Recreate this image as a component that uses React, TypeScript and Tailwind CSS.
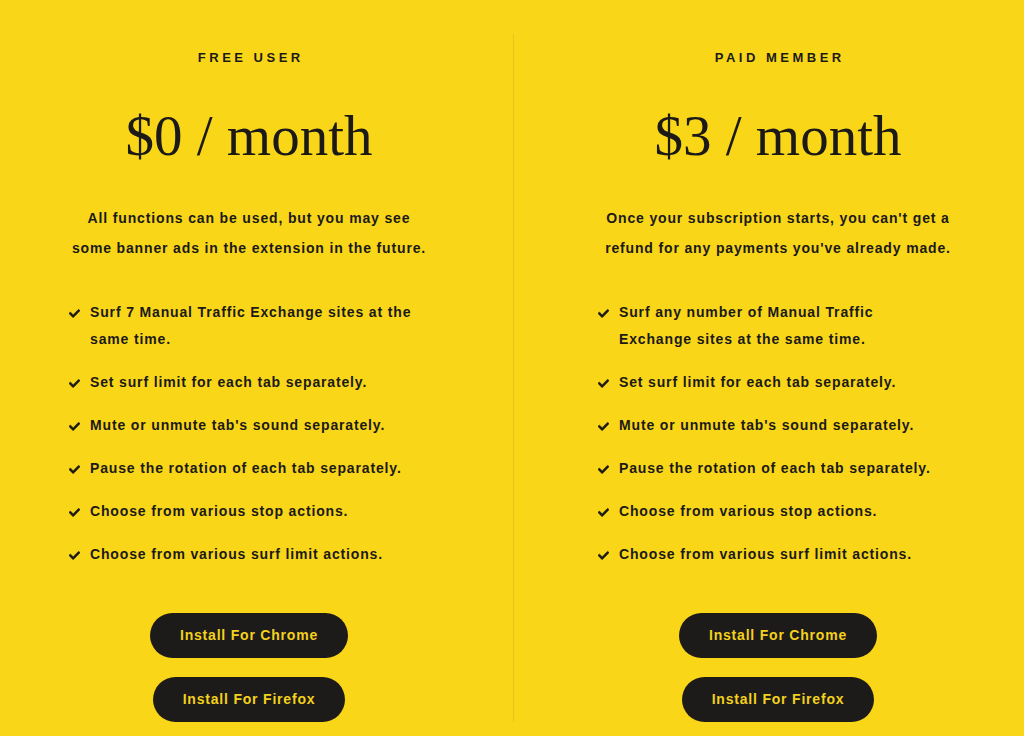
const plans = [
  {
    label: "FREE USER",
    price: "$0 / month",
    note: ["All functions can be used, but you may see", "some banner ads in the extension in the future."],
    features: [
      "Surf 7 Manual Traffic Exchange sites at the same time.",
      "Set surf limit for each tab separately.",
      "Mute or unmute tab's sound separately.",
      "Pause the rotation of each tab separately.",
      "Choose from various stop actions.",
      "Choose from various surf limit actions.",
    ],
  },
  {
    label: "PAID MEMBER",
    price: "$3 / month",
    note: ["Once your subscription starts, you can't get a", "refund for any payments you've already made."],
    features: [
      "Surf any number of Manual Traffic Exchange sites at the same time.",
      "Set surf limit for each tab separately.",
      "Mute or unmute tab's sound separately.",
      "Pause the rotation of each tab separately.",
      "Choose from various stop actions.",
      "Choose from various surf limit actions.",
    ],
  },
];

function Check() {
  return (
    <svg viewBox="0 0 512 512" className="w-[11px] h-[11px] shrink-0 mt-[9px]" fill="currentColor" stroke="currentColor" strokeWidth="20">
      <path d="M173.898 439.404l-166.4-166.4c-9.997-9.997-9.997-26.206 0-36.204l36.203-36.204c9.997-9.998 26.207-9.998 36.204 0L192 312.69 432.095 72.596c9.997-9.997 26.207-9.997 36.204 0l36.203 36.204c9.997 9.997 9.997 26.206 0 36.204l-294.4 294.401c-9.998 9.997-26.207 9.997-36.204-.001z" />
    </svg>
  );
}

function Plan({ label, price, note, features }: (typeof plans)[number]) {
  return (
    <div className="w-[498px] shrink-0 flex flex-col items-center pt-[48px] pb-[14px]">
      <div className="text-[13px] leading-[20px] font-bold tracking-[3.5px] pl-[3.5px]">{label}</div>
      <div className="mt-[39px] text-[57px] leading-[57px] font-['Liberation_Serif',serif]">{price}</div>
      <p className="mt-[39px] text-[14px] leading-[30px] font-bold tracking-[0.85px] text-center">
        {note[0]}
        <br />
        {note[1]}
      </p>
      <ul className="mt-[36px] self-start ml-[69px] w-[350px] flex flex-col gap-[16px]">
        {features.map((f, i) => (
          <li key={i} className="flex gap-[10px] text-[14px] leading-[27px] font-bold tracking-[0.85px]">
            <Check />
            <span>{f}</span>
          </li>
        ))}
      </ul>
      <div className="mt-[45px] flex flex-col items-center gap-[19px]">
        <button className="h-[45px] px-[30px] rounded-full bg-[#1c1b19] text-[#f3d11d] text-[14px] font-bold tracking-[0.8px]">
          Install For Chrome
        </button>
        <button className="h-[45px] px-[30px] rounded-full bg-[#1c1b19] text-[#f3d11d] text-[14px] font-bold tracking-[0.8px]">
          Install For Firefox
        </button>
      </div>
    </div>
  );
}

export default function App() {
  return (
    <div className="w-[1024px] h-[736px] overflow-hidden bg-[#fad619] text-[#1b1a17] font-['Liberation_Sans',Arial,sans-serif]">
      <div className="flex">
        <Plan {...plans[0]} />
        <div className="ml-[15px] w-px shrink-0 mt-[34px] mb-[14px] bg-[#e9c417]" />
        <div className="ml-[15px]">
          <Plan {...plans[1]} />
        </div>
      </div>
    </div>
  );
}
